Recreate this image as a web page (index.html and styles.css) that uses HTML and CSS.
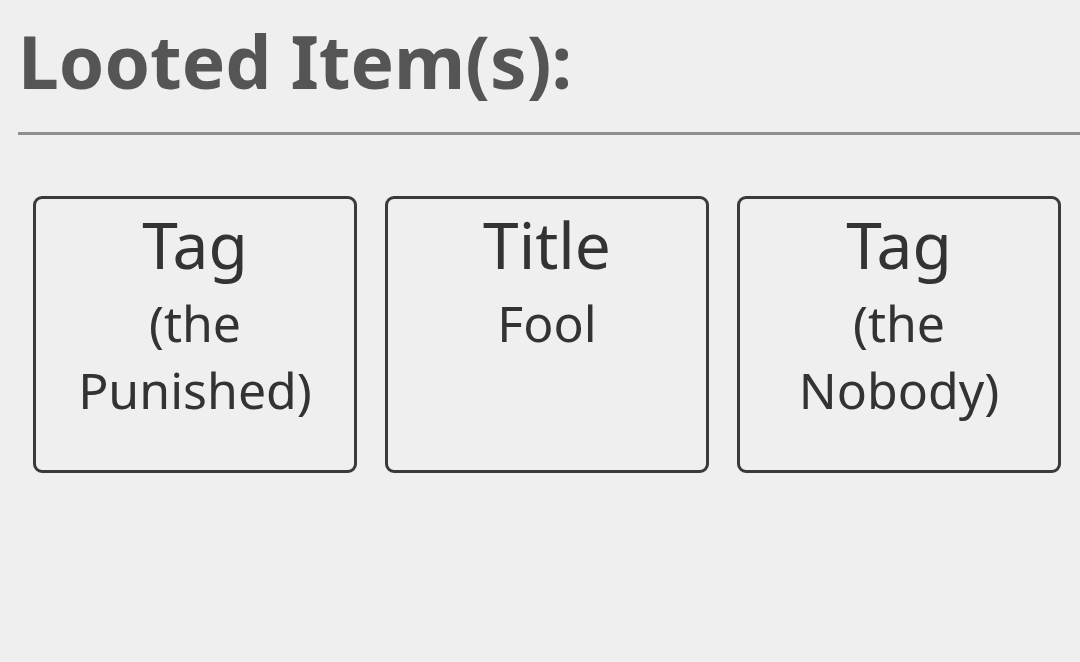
FILE: index.html
```html
<!DOCTYPE html>
<html>
<head>
<meta charset="utf-8">
<link rel="stylesheet" href="styles.css">
</head>
<body>
<main class="page">
  <h1 class="heading">Looted Item(s):</h1>
  <div class="rule"></div>
  <section class="loot">
    <div class="card">
      <div class="card-type">Tag</div>
      <div class="card-name">(the Punished)</div>
    </div>
    <div class="card">
      <div class="card-type">Title</div>
      <div class="card-name">Fool</div>
    </div>
    <div class="card">
      <div class="card-type">Tag</div>
      <div class="card-name">(the Nobody)</div>
    </div>
  </section>
</main>
</body>
</html>
```

FILE: styles.css
```css
html, body {
  margin: 0;
  padding: 0;
  background: #efefef;
}
body {
  font-family: "Noto Sans", "Open Sans", sans-serif;
  width: 1080px;
  height: 662px;
  overflow: hidden;
}
.page {
  padding: 11px 0 0 18px;
}
.heading {
  margin: 0;
  font-size: 73px;
  font-weight: 700;
  line-height: normal;
  color: #555555;
}
.rule {
  height: 3px;
  background: #8f8f8f;
  margin-top: 22px;
}
.loot {
  display: flex;
  gap: 28px;
  margin: 61px 19px 0 15px;
}
.card {
  flex: 1;
  height: 277px;
  box-sizing: border-box;
  border: 3px solid #3a3a3a;
  border-radius: 9px;
  padding: 2px 18px 0;
  text-align: center;
  color: #333333;
}
.card-type {
  font-size: 64px;
  line-height: normal;
}
.card-name {
  font-size: 50px;
  line-height: 67px;
  margin-top: 2px;
}
```
